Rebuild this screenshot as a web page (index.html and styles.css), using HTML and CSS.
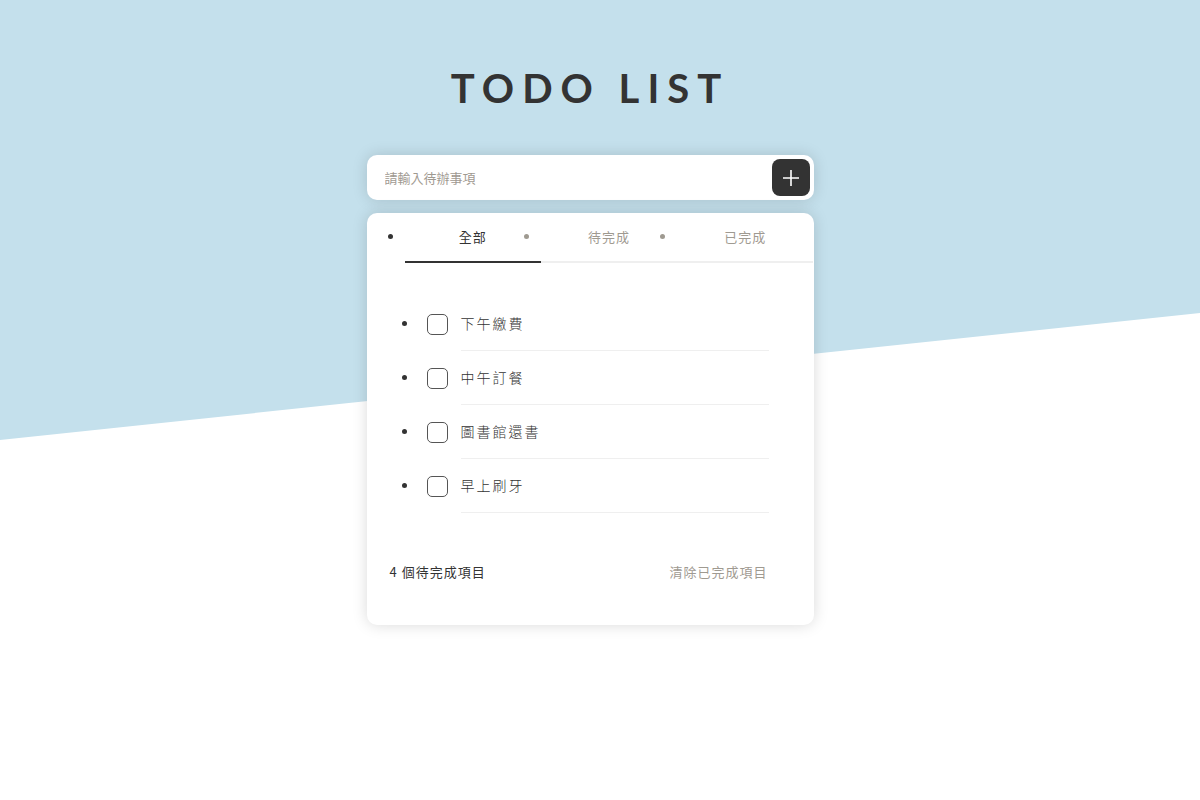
FILE: index.html
```html
<!DOCTYPE html>
<html lang="zh-Hant">
<head>
<meta charset="utf-8">
<title>TODO LIST</title>
<link rel="stylesheet" href="styles.css">
</head>
<body>
<div class="page">
  <main class="container">
    <h1 class="title">TODO LIST</h1>
    <div class="input-card">
      <input class="todo-input" type="text" placeholder="請輸入待辦事項">
      <button class="add-btn" type="button" aria-label="新增">
        <svg width="18" height="18" viewBox="0 0 18 18"><path d="M9 1v16M1 9h16" stroke="#fff" stroke-width="1.6" fill="none"/></svg>
      </button>
    </div>
    <section class="list-card">
      <ul class="tabs">
        <li class="tab active">全部</li>
        <li class="tab">待完成</li>
        <li class="tab">已完成</li>
      </ul>
      <ul class="items">
        <li class="item"><label class="item-label"><span class="check"></span><span class="item-text">下午繳費</span></label></li>
        <li class="item"><label class="item-label"><span class="check"></span><span class="item-text">中午訂餐</span></label></li>
        <li class="item"><label class="item-label"><span class="check"></span><span class="item-text">圖書館還書</span></label></li>
        <li class="item"><label class="item-label"><span class="check"></span><span class="item-text">早上刷牙</span></label></li>
      </ul>
      <div class="footer">
        <span class="count">4 個待完成項目</span>
        <span class="clear">清除已完成項目</span>
      </div>
    </section>
  </main>
</div>
</body>
</html>
```
FILE: styles.css
```css
* { box-sizing: border-box; }
html, body { margin: 0; padding: 0; }
body {
  font-family: "Noto Sans", "Noto Sans CJK TC", sans-serif;
  color: #333;
  background: #fff;
}
.page {
  position: relative;
  min-height: 800px;
  overflow: hidden;
}
.page::before {
  content: "";
  position: absolute;
  left: 0; top: 0; right: 0;
  height: 440px;
  background: #c4e0ec;
  clip-path: polygon(0 0, 100% 0, 100% 313px, 0 440px);
  z-index: 0;
}
.container {
  position: relative;
  z-index: 1;
  width: 467px;
  margin: 0 auto;
  padding: 58px 20px 0 0;
}
.title {
  margin: 0 0 37px;
  font-family: Lato, "Noto Sans", sans-serif;
  font-weight: 700;
  font-size: 40px;
  line-height: 60px;
  letter-spacing: 8px;
  text-align: center;
  color: #333;
}
.input-card {
  display: flex;
  align-items: center;
  height: 45px;
  padding: 0 4px 0 18px;
  background: #fff;
  border-radius: 10px;
  box-shadow: 0 0 15px rgba(0, 0, 0, 0.15);
}
.todo-input {
  flex: 1;
  border: none;
  outline: none;
  background: transparent;
  font-family: "Noto Sans CJK TC", sans-serif;
  font-size: 13px;
  color: #333;
  padding: 0;
}
.todo-input::placeholder { color: #9f9a91; }
.add-btn {
  width: 38px;
  height: 37px;
  border: none;
  border-radius: 8px;
  background: #333;
  display: flex;
  align-items: center;
  justify-content: center;
  padding: 0;
}
.list-card {
  margin-top: 13px;
  background: #fff;
  border-radius: 10px;
  box-shadow: 0 0 15px rgba(0, 0, 0, 0.15);
  padding-bottom: 43px;
}
.tabs {
  display: flex;
  margin: 0;
  padding: 0 0 0 38px;
}
.tab {
  flex: 1;
  display: list-item;
  text-align: center;
  font-family: "Noto Sans CJK TC", sans-serif;
  font-size: 13px;
  letter-spacing: 1px;
  line-height: 48px;
  color: #9f9a91;
  border-bottom: 2px solid #efefef;
}
.tab.active {
  color: #333;
  border-bottom-color: #333;
}
.items {
  margin: 0;
  padding: 34px 45px 0 52px;
}
.item {
  color: #333;
  font-size: 14px;
}
.item-label {
  display: flex;
  align-items: center;
}
.check {
  width: 21px;
  height: 21px;
  margin: 0 13px 0 8px;
  border: 1px solid #555;
  border-radius: 5px;
  flex: none;
}
.item-text {
  flex: 1;
  align-self: baseline;
  padding: 16px 0;
  line-height: 21px;
  font-family: "Noto Sans CJK TC", sans-serif;
  font-size: 14px;
  font-weight: 300;
  letter-spacing: 2px;
  border-bottom: 1px solid #efefef;
}
.footer {
  display: flex;
  justify-content: space-between;
  margin-top: 49px;
  padding: 0 46px 0 23px;
  font-family: "Noto Sans CJK TC", sans-serif;
  font-size: 13px;
  line-height: 20px;
  letter-spacing: 1px;
}
.count { color: #333; }
.clear { color: #9f9a91; }
```
